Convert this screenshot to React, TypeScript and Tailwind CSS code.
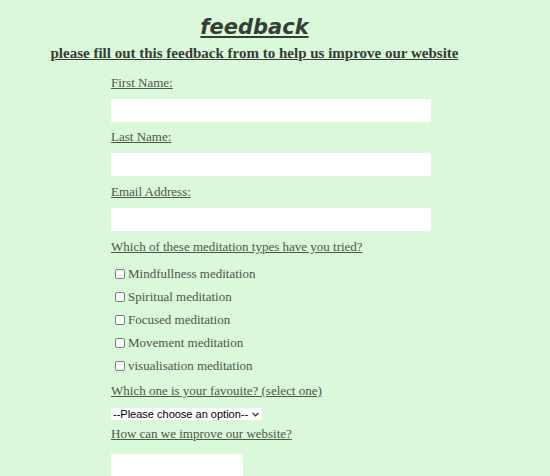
import { useState } from "react";

const meditations = [
  "Mindfullness meditation",
  "Spiritual meditation",
  "Focused meditation",
  "Movement meditation",
  "visualisation meditation",
];

function FieldLabel({ text, className = "" }: { text: string; className?: string }) {
  return (
    <label className={`block text-[13px] leading-[16px] underline text-[#4d574d] ${className}`}>
      {text}
    </label>
  );
}

export default function App() {
  const [checked, setChecked] = useState<string[]>([]);

  const toggle = (m: string) =>
    setChecked((prev) => (prev.includes(m) ? prev.filter((x) => x !== m) : [...prev, m]));

  return (
    <div className="min-h-screen bg-[#daf8da] font-['Liberation_Serif',serif] overflow-hidden">
      <div className="w-[509px] text-center pt-[15px]">
        <h1 className="font-['DejaVu_Sans',sans-serif] font-bold italic text-[21px] leading-[24px] underline text-[#353d35]">
          feedback
        </h1>
        <h2 className="mt-[6px] font-bold text-[15px] leading-[17px] underline text-[#353d35]">
          please fill out this feedback from to help us improve our website
        </h2>
      </div>

      <form className="pl-[111px] pt-[13px]">
        <FieldLabel text="First Name:" />
        <input type="text" className="block mt-[8px] w-[320px] h-[23px] bg-white outline-none" />

        <FieldLabel text="Last Name:" className="mt-[7px]" />
        <input type="text" className="block mt-[8px] w-[320px] h-[23px] bg-white outline-none" />

        <FieldLabel text="Email Address:" className="mt-[8px]" />
        <input type="email" className="block mt-[8px] w-[320px] h-[23px] bg-white outline-none" />

        <FieldLabel text="Which of these meditation types have you tried?" className="mt-[8px]" />
        <div className="mt-[7px] flex flex-col">
          {meditations.map((m) => (
            <label key={m} className="flex items-center h-[23px] text-[13px] leading-[16px] text-[#4d574d] cursor-pointer">
              <input
                type="checkbox"
                checked={checked.includes(m)}
                onChange={() => toggle(m)}
                className="appearance-none ml-[4px] mr-[3px] w-[10px] h-[10px] bg-white border border-[#7a7f7a] rounded-[2px] checked:bg-[#3b6bd6]"
              />
              {m}
            </label>
          ))}
        </div>

        <FieldLabel text="Which one is your favouite? (select one)" className="mt-[6px]" />
        <div className="mt-[9px] w-[151px] h-[12px] bg-white flex items-center justify-between pl-[2px] pr-[3px] font-['Liberation_Sans',Arial,sans-serif] text-[11px] leading-[12px] text-black whitespace-nowrap cursor-default">
          <span>--Please choose an option--</span>
          <svg className="w-[7px] h-[5px] shrink-0" viewBox="0 0 7 5" fill="none" stroke="#222" strokeWidth="1.2">
            <path d="M0.6 0.8 L3.5 3.8 L6.4 0.8" />
          </svg>
        </div>

        <FieldLabel text="How can we improve our website?" className="mt-[6px]" />
        <textarea className="block mt-[12px] w-[132px] h-[40px] bg-white outline-none resize-none" />
      </form>
    </div>
  );
}
